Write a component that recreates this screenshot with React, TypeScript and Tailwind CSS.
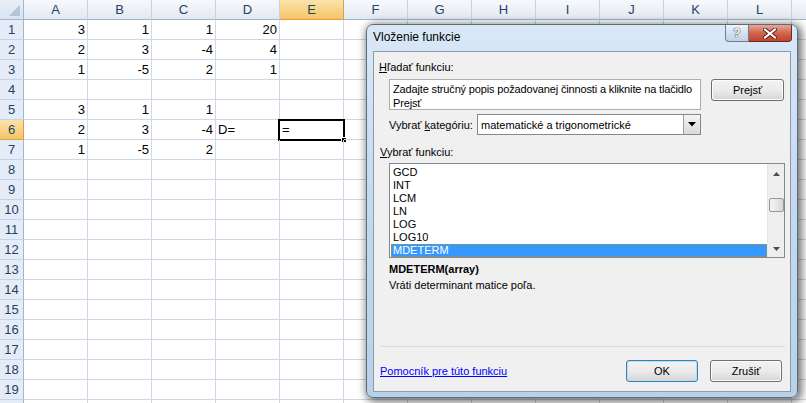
import React from "react";

const COLS = ["A", "B", "C", "D", "E", "F", "G", "H", "I", "J", "K", "L", "M"];

type Cell = { v: string; left?: boolean };
const DATA: Record<string, Cell> = {
  A1: { v: "3" }, B1: { v: "1" }, C1: { v: "1" }, D1: { v: "20" },
  A2: { v: "2" }, B2: { v: "3" }, C2: { v: "-4" }, D2: { v: "4" },
  A3: { v: "1" }, B3: { v: "-5" }, C3: { v: "2" }, D3: { v: "1" },
  A5: { v: "3" }, B5: { v: "1" }, C5: { v: "1" },
  A6: { v: "2" }, B6: { v: "3" }, C6: { v: "-4" }, D6: { v: "D=", left: true },
  E6: { v: "=", left: true },
  A7: { v: "1" }, B7: { v: "-5" }, C7: { v: "2" },
};

const ROWS = Array.from({ length: 20 }, (_, i) => i + 1);

function Sheet() {
  return (
    <div className="flex flex-col w-[806px] h-[403px] overflow-hidden bg-white text-[13px] text-black [font-family:'Liberation_Sans',Arial,sans-serif]">
      <div className="flex h-[20px] shrink-0">
        <div className="w-[24px] shrink-0 h-full border-r border-b border-[#9eb6ce] bg-gradient-to-b from-[#e8eef6] to-[#dae3ee] flex items-end justify-end p-[3px]">
          <svg width="11" height="11" viewBox="0 0 11 11">
            <polygon points="11,0 11,11 0,11" fill="#b4c5da" />
          </svg>
        </div>
        {COLS.map((c) => (
          <div
            key={c}
            className={
              c === "E"
                ? "w-[64px] shrink-0 h-full border-r border-b border-r-[#c9a85e] border-b-[#f29536] bg-gradient-to-b from-[#fbe3a9] to-[#f3c566] flex items-center justify-center text-[#27415f]"
                : "w-[64px] shrink-0 h-full border-r border-b border-r-[#c5d3e3] border-b-[#9eb6ce] bg-gradient-to-b from-[#f7f9fc] to-[#e3e9f1] flex items-center justify-center text-[#27415f]"
            }
          >
            {c === "M" ? "" : c}
          </div>
        ))}
      </div>
      {ROWS.map((r) => (
        <div key={r} className="flex h-[20px] shrink-0">
          <div
            className={
              r === 6
                ? "w-[24px] shrink-0 h-full border-r border-b border-r-[#f29536] border-b-[#d9a64a] bg-gradient-to-b from-[#fbe3a9] to-[#f3c566] flex items-center justify-center text-[#27415f]"
                : "w-[24px] shrink-0 h-full border-r border-b border-r-[#9eb6ce] border-b-[#c5d3e3] bg-[#e4ecf7] flex items-center justify-center text-[#27415f]"
            }
          >
            {r < 20 ? r : ""}
          </div>
          {COLS.map((c) => {
            const cell = DATA[c + r];
            const selected = c === "E" && r === 6;
            return (
              <div
                key={c}
                className={
                  "relative w-[64px] shrink-0 h-full border-r border-b border-[#d0d7e5] flex items-end pb-[1px] leading-[16px] " +
                  (cell && cell.left ? "justify-start pl-[2px]" : "justify-end pr-[2px]")
                }
              >
                {cell ? cell.v : null}
                {selected ? (
                  <>
                    <div className="absolute -left-[2px] -top-[1px] w-[67px] h-[22px] border-2 border-black" />
                    <div className="absolute left-[61px] top-[17px] w-[6px] h-[6px] bg-black border border-white" />
                  </>
                ) : null}
              </div>
            );
          })}
        </div>
      ))}
    </div>
  );
}

function Btn({ label, w, def }: { label: React.ReactNode; w: string; def?: boolean }) {
  return (
    <div
      className={
        "h-[22px] rounded-[3px] border flex items-center justify-center text-[11px] text-black " +
        w +
        (def
          ? " border-[#3c7fb1] bg-gradient-to-b from-[#f2f2f2] via-[#ebebeb] to-[#d6d6d6] shadow-[inset_0_0_0_1px_#b6ddf5]"
          : " border-[#707070] bg-gradient-to-b from-[#f2f2f2] via-[#ebebeb] to-[#d6d6d6] shadow-[inset_0_0_0_1px_#fcfcfc]")
      }
    >
      {label}
    </div>
  );
}

function Dialog() {
  const items = ["GCD", "INT", "LCM", "LN", "LOG", "LOG10", "MDETERM"];
  return (
    <div className="absolute left-[366px] top-[24px] w-[432px] h-[374px] rounded-[7px] border border-[#5a6b7e] bg-gradient-to-b from-[#d9e8f7] via-[#c3d9f0] to-[#b8d1ea] shadow-[2px_2px_9px_2px_rgba(0,0,0,0.55)] flex flex-col px-[6px] pb-[5px] [font-family:'Liberation_Sans',Arial,sans-serif]">
      <div className="h-[26px] shrink-0 flex items-start relative">
        <div className="pt-[5px] text-[12px] text-black leading-[14px]">Vloženie funkcie</div>
        <div className="ml-auto flex mr-[-1px]">
          <div className="w-[24px] h-[17px] rounded-bl-[4px] border border-t-0 border-[#6d7c8e] bg-gradient-to-b from-[#eef4fa] via-[#d3e1ef] to-[#c0d3e6] flex items-center justify-center text-[12px] font-bold text-white leading-none [text-shadow:0_0_1px_#222,0_0_1px_#222]">
            ?
          </div>
          <div className="w-[43px] h-[17px] rounded-br-[4px] border border-l-0 border-t-0 border-[#6e2a22] bg-gradient-to-b from-[#e6a898] via-[#d2644f] to-[#c1412b] flex items-center justify-center">
            <svg width="14" height="11" viewBox="0 0 14 11">
              <path d="M2 1.5 L12 9.5 M12 1.5 L2 9.5" stroke="#5a241c" strokeWidth="4" strokeLinecap="square" />
              <path d="M2 1.5 L12 9.5 M12 1.5 L2 9.5" stroke="#ffffff" strokeWidth="2" strokeLinecap="square" />
            </svg>
          </div>
        </div>
      </div>
      <div className="flex-1 border border-[#8c9aab] bg-[#f0f0f0] flex flex-col text-[11px] text-black leading-[14px]">
        <div className="mt-[8px] ml-[5px]">
          <span className="underline">H</span>ľadať funkciu:
        </div>
        <div className="mt-[5px] ml-[15px] flex items-start">
          <div className="w-[312px] h-[31px] border border-[#abadb3] bg-white pl-[3px] pr-[1px] pt-[2px] leading-[14px] tracking-[-0.15px]">
            Zadajte stručný popis požadovanej činnosti a kliknite na tlačidlo Prejsť
          </div>
          <div className="ml-[10px]">
            <Btn w="w-[73px]" label={<span>Pre<span className="underline">j</span>sť</span>} />
          </div>
        </div>
        <div className="mt-[4px] ml-[15px] flex items-center h-[21px]">
          <div className="w-[88px]">
            Vybrať <span className="underline">k</span>ategóriu:
          </div>
          <div className="w-[224px] h-[21px] border border-[#828790] bg-white flex items-center">
            <div className="flex-1 pl-[3px]">matematické a trigonometrické</div>
            <div className="w-[17px] h-[19px] border-l border-[#a0a0a0] bg-gradient-to-b from-[#f5f5f5] to-[#d9d9d9] flex items-center justify-center">
              <svg width="8" height="5" viewBox="0 0 8 5">
                <polygon points="0,0 8,0 4,4.5" fill="#000" />
              </svg>
            </div>
          </div>
        </div>
        <div className="mt-[10px] ml-[6px]">
          <span className="underline">V</span>ybrať funkciu:
        </div>
        <div className="mt-[4px] ml-[15px] w-[396px] h-[95px] border border-[#828790] bg-white flex">
          <div className="flex-1 pl-[1px] pt-[2px] flex flex-col leading-[13px]">
            {items.map((it) => (
              <div
                key={it}
                className={
                  it === "MDETERM"
                    ? "h-[13px] pl-[2px] bg-[#3399ff] text-white outline outline-1 outline-dotted outline-[#c68a2f] -outline-offset-1"
                    : "h-[13px] pl-[2px]"
                }
              >
                {it}
              </div>
            ))}
          </div>
          <div className="w-[17px] bg-[#eeeeee] border-l border-[#e6e6e6] flex flex-col items-center">
            <div className="h-[17px] flex items-center justify-center mt-[1px]">
              <svg width="7" height="4" viewBox="0 0 7 4">
                <polygon points="0,4 7,4 3.5,0" fill="#4d4d4d" />
              </svg>
            </div>
            <div className="mt-[16px] w-[15px] h-[14px] rounded-[2px] border border-[#979797] bg-gradient-to-r from-[#f3f3f3] via-[#e8e8e8] to-[#d4d4d4]" />
            <div className="mt-auto h-[17px] flex items-center justify-center">
              <svg width="7" height="4" viewBox="0 0 7 4">
                <polygon points="0,0 7,0 3.5,4" fill="#4d4d4d" />
              </svg>
            </div>
          </div>
        </div>
        <div className="mt-[4px] ml-[15px] font-bold">MDETERM(array)</div>
        <div className="mt-[2px] ml-[15px]">Vráti determinant matice poľa.</div>
        <div className="mt-[54px] ml-[6px] w-[405px] h-[1px] bg-[#d5dde6]" />
        <div className="mt-[13px] ml-[6px] flex items-center">
          <div className="text-[#0000ff] underline">Pomocník pre túto funkciu</div>
          <div className="ml-auto mr-[8px] flex gap-[12px]">
            <Btn def w="w-[72px]" label="OK" />
            <Btn w="w-[72px]" label={<span>Zrušiť</span>} />
          </div>
        </div>
      </div>
    </div>
  );
}

export default function App() {
  return (
    <div className="relative w-[806px] h-[403px] overflow-hidden bg-white">
      <Sheet />
      <Dialog />
    </div>
  );
}
